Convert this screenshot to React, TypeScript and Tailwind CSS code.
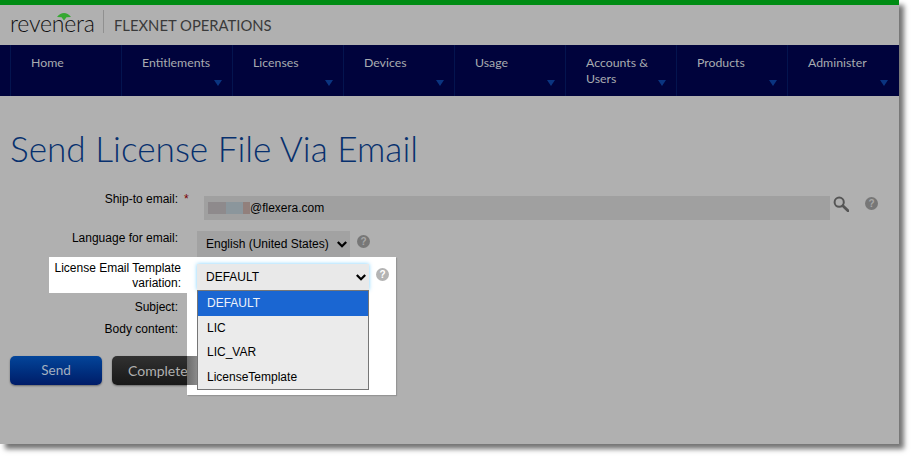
const navItems = ["Home", "Entitlements", "Licenses", "Devices", "Usage", "Accounts & Users", "Products", "Administer"];
const options = ["DEFAULT", "LIC", "LIC_VAR", "LicenseTemplate"];
const arial = "font-['Liberation_Sans',Arial,sans-serif]";
const lato = "font-['Lato',sans-serif]";

function HelpIcon({ light }: { light?: boolean }) {
  return (
    <span
      className={`flex h-[13px] w-[13px] items-center justify-center rounded-full text-[10px] font-bold leading-none ${arial} ${
        light ? "bg-[#b4b4b4] text-white" : "bg-[#777777] text-[#a8a8a8]"
      }`}
    >
      ?
    </span>
  );
}

function Chevron() {
  return (
    <svg width="10" height="7" viewBox="0 0 10 7" className="shrink-0">
      <path d="M0.8 1 5 5.2 9.2 1" fill="none" stroke="#000" strokeWidth="2.3" />
    </svg>
  );
}

function SearchIcon() {
  return (
    <svg width="16" height="16" viewBox="0 0 16 16" className="shrink-0">
      <circle cx="6.2" cy="6.2" r="4.6" fill="none" stroke="#555555" strokeWidth="2" />
      <path d="M9.8 9.8 15 14.8" fill="none" stroke="#555555" strokeWidth="2.8" strokeLinecap="round" />
    </svg>
  );
}

function Logo() {
  return (
    <div className="relative mb-1 flex items-end">
      <svg width="14" height="8" viewBox="0 0 14 8" className="absolute left-[47px] top-[1px]">
        <path d="M7 0 C4.5 0 2 1.5 0 4 L4.5 4.2 L7 7.5 L9.5 4.2 L14 4 C12 1.5 9.5 0 7 0Z" fill="#36a832" />
      </svg>
      <span className={`${lato} text-[23px] font-light leading-none tracking-[-0.2px] text-[#111111]`}>revenera</span>
    </div>
  );
}

function FormRow({ label, children, className }: { label: string; children?: React.ReactNode; className?: string }) {
  return (
    <div className={`flex ${className ?? ""}`}>
      <div className={`w-[168px] text-right text-xs leading-[15px] text-black ${arial}`}>{label}</div>
      {children}
    </div>
  );
}

export default function App() {
  return (
    <div className="h-[459px] w-[914px] overflow-hidden bg-white">
      <div className="flex h-[444px] w-[899px] flex-col bg-[#b0b0b0] shadow-[5px_5px_5px_rgba(0,0,0,0.55)]">
        <div className="h-[5px] bg-[#008c14]" />
        <header className="flex h-10 items-center pl-[10px]">
          <div className="w-[84px]">
            <Logo />
          </div>
          <div className="mb-[7px] ml-[9px] mr-[10px] h-[23px] w-px bg-[#909090]" />
          <span className={`${lato} text-[14.8px] leading-none text-[#3a3a3a]`}>FLEXNET OPERATIONS</span>
        </header>
        <nav className="flex h-[51px] bg-[#00033c] pl-[10px]">
          {navItems.map((item) => (
            <div key={item} className="relative w-[111px] border-l border-[#04144f] pl-5 pr-6 pt-[10px]">
              <span className={`${lato} block text-[12.3px] leading-4 text-[#a8acb0]`}>{item}</span>
              {item !== "Home" && (
                <span className="absolute bottom-[10px] right-[10px] h-0 w-0 border-x-[4.5px] border-t-[6px] border-x-transparent border-t-[#0a3480]" />
              )}
            </div>
          ))}
        </nav>
        <main className="relative flex-1 pl-[10px]">
          <h1 className={`${lato} mt-[30px] text-[35.2px] font-light leading-[44px] text-[#07306e]`}>
            Send License File Via Email
          </h1>
          <div className="mt-[22px] flex flex-col">
            <FormRow label="Ship-to email:" className="h-[39px]">
              <span className={`ml-[6px] w-[5px] text-xs leading-[15px] text-[#7a0000] ${arial}`}>*</span>
              <div className={`ml-[15px] mt-1 flex h-6 w-[626px] items-center bg-[#a0a0a0] pl-1 text-xs text-black ${arial}`}>
                <span className="h-3 w-[18px] bg-[#8e8a8c]" />
                <span className="h-3 w-[17px] bg-[#8b969c]" />
                <span className="h-3 w-[7px] bg-[#92807c]" />
                @flexera.com
              </div>
              <span className="ml-[3px] mt-1">
                <SearchIcon />
              </span>
              <span className="ml-[16px] mt-[5px]">
                <HelpIcon />
              </span>
            </FormRow>
            <FormRow label="Language for email:" className="h-[26px]">
              <div className={`ml-[19px] flex h-[26px] w-[153px] items-center justify-between bg-[#a2a2a2] pl-[9px] pr-[3px] text-xs text-black ${arial}`}>
                English (United States)
                <Chevron />
              </div>
              <span className="ml-[7px] mt-1">
                <HelpIcon />
              </span>
            </FormRow>
            <div className="relative h-[43px] w-[358px]">
              <div className={`absolute left-[39px] top-0 h-9 w-[139px] bg-white pr-[7px] pt-1 text-right text-xs leading-[15px] text-black ${arial}`}>
                License Email Template variation:
              </div>
              <div className="absolute left-[177px] top-0 z-10 h-[138px] w-[209px] bg-white shadow-[1px_1px_1px_rgba(0,0,0,0.15)]">
                <div className={`absolute left-[10px] top-[7px] flex h-[26px] w-[172px] items-center justify-between bg-[#e9e9e9] pl-[9px] pr-[3px] text-xs text-black shadow-[0_0_4px_rgba(110,205,255,0.9)] ${arial}`}>
                  DEFAULT
                  <Chevron />
                </div>
                <span className="absolute left-[189px] top-[11px]">
                  <HelpIcon light />
                </span>
                <ul className={`absolute left-[10px] top-[33px] w-[172px] border border-[#767676] bg-[#ebebeb] text-xs text-black ${arial}`}>
                  {options.map((option, i) => (
                    <li
                      key={option}
                      className={`flex h-[24.5px] items-center pl-[9px] ${i === 0 ? "bg-[#1a66d2] text-[#eef3fa]" : ""}`}
                    >
                      {option}
                    </li>
                  ))}
                </ul>
                <div className="absolute left-0 top-[99px] h-[29px] w-[10px] bg-gradient-to-r from-[#6c6c6c] to-[#8a8a8a]" />
              </div>
            </div>
            <FormRow label="Subject:" className="h-[22px]" />
            <FormRow label="Body content:" className="h-[34px]" />
            <div className="flex gap-[10px]">
              <button className={`h-[29px] w-[92px] rounded-[5px] bg-gradient-to-b from-[#04459a] to-[#001c68] text-[13.5px] text-[#a3b0c0] shadow-[0_1px_2px_rgba(0,0,0,0.4)] ${lato}`}>
                Send
              </button>
              <button className={`h-[29px] w-[100px] rounded-[5px] bg-gradient-to-b from-[#313131] to-[#181818] pl-4 text-left text-[14px] text-[#b0b0b0] shadow-[0_1px_2px_rgba(0,0,0,0.4)] ${lato}`}>
                Complete
              </button>
            </div>
          </div>
        </main>
      </div>
    </div>
  );
}
